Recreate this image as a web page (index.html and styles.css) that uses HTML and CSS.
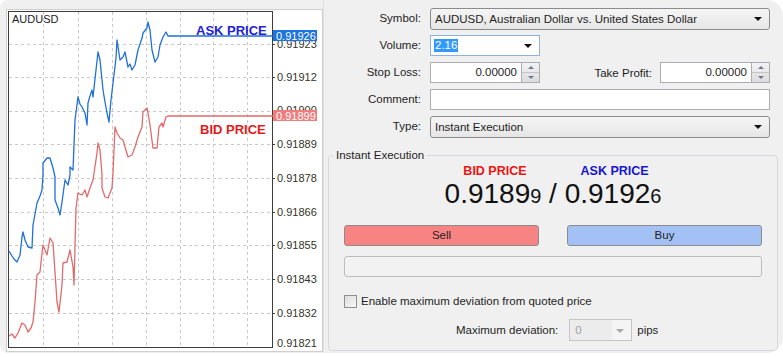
FILE: index.html
```html
<!DOCTYPE html>
<html>
<head>
  <title>Order - AUDUSD</title>
  <link rel="stylesheet" href="styles.css">
</head>
<body>
<div class="screen">

  <div class="chart-pane">
    <svg class="chart" width="317" height="343" viewBox="6 9 317 343">
      <rect x="6.5" y="9.5" width="316" height="342" fill="#fff" stroke="#cfcfcf"/>
      <rect x="8.5" y="11.5" width="264" height="336" fill="#fff" stroke="#3c3c3c"/>

      <g class="grid">
        <line x1="43.5" y1="12" x2="43.5" y2="347"/>
        <line x1="78.5" y1="12" x2="78.5" y2="347"/>
        <line x1="112.5" y1="12" x2="112.5" y2="347"/>
        <line x1="146.5" y1="12" x2="146.5" y2="347"/>
        <line x1="180.5" y1="12" x2="180.5" y2="347"/>
        <line x1="213.5" y1="12" x2="213.5" y2="347"/>
        <line x1="247.5" y1="12" x2="247.5" y2="347"/>
        <line x1="9" y1="44.5" x2="272" y2="44.5"/>
        <line x1="9" y1="77.5" x2="272" y2="77.5"/>
        <line x1="9" y1="111.5" x2="272" y2="111.5"/>
        <line x1="9" y1="144.5" x2="272" y2="144.5"/>
        <line x1="9" y1="178.5" x2="272" y2="178.5"/>
        <line x1="9" y1="212.5" x2="272" y2="212.5"/>
        <line x1="9" y1="245.5" x2="272" y2="245.5"/>
        <line x1="9" y1="279.5" x2="272" y2="279.5"/>
        <line x1="9" y1="313.5" x2="272" y2="313.5"/>
      </g>

      <text class="symbol-name" x="12" y="23">AUDUSD</text>

      <polyline class="ask-line" points="9,251 12,256 14,259 17,262 20,255 22,237 23,232 25,240 28,247 32,248 33,225 37,203 40,196 42,190 43,175 43,163 47,158 50,158 53,168 55,177 55,200 58,208 60,215 62,202 65,180 68,185 70,175 70,167 73,170 75,120 78,97 80,104 82,107 85,113 87,125 88,103 90,96 92,90 93,97 96,70 98,52 100,60 103,90 105,102 107,113 109,122 111,100 113,83 116,58 117,40 120,60 123,57 125,52 128,67 130,64 132,70 135,65 138,50 142,38 143,33 147,28 148,22 150,30 152,50 155,62 158,57 160,45 163,37 166,32 168,36 273,36"/>
      <polyline class="bid-line" points="9,336 12,334 15,338 18,333 22,323 25,325 28,332 31,328 33,322 35,302 37,275 40,272 42,253 43,245 47,255 50,238 53,243 55,272 57,302 59,312 62,285 63,263 67,262 70,250 73,267 74,285 76,208 78,193 82,195 85,190 87,197 90,188 93,180 97,153 98,143 100,150 102,175 102,188 105,197 108,198 112,188 113,173 115,127 117,133 120,138 123,140 125,147 128,157 132,155 135,147 138,137 142,127 143,112 147,108 148,113 150,125 153,148 157,148 159,127 162,123 163,127 166,117 168,116 273,116"/>

      <text class="chart-ask" x="196" y="35">ASK PRICE</text>
      <text class="chart-bid" x="200" y="134">BID PRICE</text>

      <g class="ticks">
        <line x1="272" y1="44.5" x2="275" y2="44.5"/>
        <line x1="272" y1="77.5" x2="275" y2="77.5"/>
        <line x1="272" y1="144.5" x2="275" y2="144.5"/>
        <line x1="272" y1="178.5" x2="275" y2="178.5"/>
        <line x1="272" y1="212.5" x2="275" y2="212.5"/>
        <line x1="272" y1="245.5" x2="275" y2="245.5"/>
        <line x1="272" y1="279.5" x2="275" y2="279.5"/>
        <line x1="272" y1="313.5" x2="275" y2="313.5"/>
      </g>

      <g class="axis">
        <text x="277" y="48">0.91923</text>
        <text x="277" y="81">0.91912</text>
        <text x="277" y="114">0.91900</text>
        <text x="277" y="148">0.91889</text>
        <text x="277" y="182">0.91878</text>
        <text x="277" y="216">0.91866</text>
        <text x="277" y="249">0.91855</text>
        <text x="277" y="283">0.91843</text>
        <text x="277" y="317">0.91832</text>
        <text x="277" y="347">0.91821</text>
      </g>

      <rect x="273" y="30" width="44" height="11" fill="#1d73e2"/>
      <text class="tag" x="276" y="39.5">0.91926</text>
      <rect x="273" y="110" width="44" height="11" fill="#f07c7c"/>
      <text class="tag" x="276" y="119.5">0.91899</text>
    </svg>
  </div>

  <div class="order-pane">
    <div class="order-form">
      <label class="field-label">Symbol:</label>
      <div class="combo">AUDUSD, Australian Dollar vs. United States Dollar<span class="arrow"></span></div>

      <label class="field-label">Volume:</label>
      <div class="volume-box"><span class="selected">2.16</span><span class="arrow"></span></div>

      <label class="field-label">Stop Loss:</label>
      <div class="sl-tp-row">
        <div class="spinbox">
          <div class="spin-value">0.00000</div>
          <div class="spin-buttons"><span class="up"></span><span class="down"></span></div>
        </div>
        <label class="tp-label">Take Profit:</label>
        <div class="spinbox">
          <div class="spin-value">0.00000</div>
          <div class="spin-buttons"><span class="up"></span><span class="down"></span></div>
        </div>
      </div>

      <label class="field-label">Comment:</label>
      <div class="text-box"></div>

      <label class="field-label">Type:</label>
      <div class="combo">Instant Execution<span class="arrow"></span></div>
    </div>

    <fieldset class="exec-group">
      <legend>Instant Execution</legend>

      <div class="price-titles">
        <span class="bid-title">BID PRICE</span>
        <span class="ask-title">ASK PRICE</span>
      </div>
      <div class="quote">0.9189<small>9</small> / 0.9192<small>6</small></div>

      <div class="trade-buttons">
        <div class="btn sell">Sell</div>
        <div class="btn buy">Buy</div>
      </div>

      <div class="status-bar"></div>

      <div class="check-row">
        <span class="checkbox"></span>
        <span>Enable maximum deviation from quoted price</span>
      </div>

      <div class="deviation-row">
        <span>Maximum deviation:</span>
        <div class="dev-combo"><span class="dev-value">0</span><span class="arrow"></span></div>
        <span>pips</span>
      </div>
    </fieldset>
  </div>

</div>
</body>
</html>
```

FILE: styles.css
```css
body {
  margin: 0;
  background: #fff;
  font-family: "Liberation Sans", Arial, sans-serif;
  font-size: 11.5px;
  color: #1e1e1e;
}

.screen {
  width: 783px;
  height: 353px;
  display: flex;
  background: #f0f0f0;
  border-radius: 8px 16px 16px 8px;
  overflow: hidden;
}

/* chart window */
.chart-pane {
  width: 317px;
  padding: 9px 0 0 6px;
}

.chart {
  display: block;
  font-family: "Liberation Sans", Arial, sans-serif;
}

.grid line {
  stroke: #c9c9c9;
  stroke-width: 1;
  stroke-dasharray: 3 3;
}

.ticks line {
  stroke: #3c3c3c;
}

.ask-line, .bid-line {
  fill: none;
  stroke-width: 1.3;
  stroke-linejoin: round;
}

.ask-line {
  stroke: #1f6fdc;
}

.bid-line {
  stroke: #e26a6a;
}

.symbol-name {
  font-size: 11px;
  fill: #222;
}

.chart-ask, .chart-bid {
  font-size: 13px;
  font-weight: bold;
}

.chart-ask {
  fill: #2222d6;
}

.chart-bid {
  fill: #e41b1b;
}

.axis text {
  font-size: 11px;
  fill: #34342a;
}

.tag {
  font-size: 11px;
  fill: #fff;
}

/* order window */
.order-pane {
  flex: 1;
  border-left: 1px solid #e0e0e0;
}

.order-form {
  display: grid;
  grid-template-columns: 97px 340px;
  grid-auto-rows: 21px;
  column-gap: 9px;
  row-gap: 6px;
  padding-top: 8px;
}

.field-label {
  text-align: right;
  line-height: 21px;
}

.combo {
  position: relative;
  box-sizing: border-box;
  height: 22px;
  line-height: 20px;
  padding-left: 4px;
  border: 1px solid #8b8b8b;
  border-radius: 3px;
  background: linear-gradient(#f5f5f5, #e6e6e6);
}

.arrow {
  position: absolute;
  right: 7px;
  top: 8px;
  width: 0;
  height: 0;
  border-left: 4px solid transparent;
  border-right: 4px solid transparent;
  border-top: 4px solid #111;
}

.volume-box {
  position: relative;
  box-sizing: border-box;
  width: 110px;
  height: 21px;
  padding: 3px 0 0 3px;
  border: 1px solid #8fb2d8;
  background: #fff;
}

.volume-box .selected {
  display: inline-block;
  background: #3399ff;
  color: #fff;
  line-height: 13px;
  padding: 0 1px;
}

.sl-tp-row {
  display: flex;
  align-items: center;
}

.spinbox {
  display: flex;
  width: 110px;
  height: 21px;
}

.spin-value {
  box-sizing: border-box;
  width: 92px;
  height: 21px;
  line-height: 19px;
  padding-right: 4px;
  text-align: right;
  background: #fff;
  border: 1px solid #abadb3;
}

.spin-buttons {
  box-sizing: border-box;
  width: 18px;
  height: 21px;
  display: flex;
  flex-direction: column;
  border: 1px solid #abadb3;
  border-left: none;
  background: linear-gradient(#f3f3f3, #dcdcdc);
}

.spin-buttons span {
  flex: 1;
  display: flex;
  align-items: center;
  justify-content: center;
}

.spin-buttons .up {
  border-bottom: 1px solid #c4c4c4;
}

.spin-buttons .up::before,
.spin-buttons .down::before {
  content: "";
  width: 0;
  height: 0;
  border-left: 3px solid transparent;
  border-right: 3px solid transparent;
}

.spin-buttons .up::before {
  border-bottom: 3px solid #6a7b98;
}

.spin-buttons .down::before {
  border-top: 3px solid #6a7b98;
}

.tp-label {
  flex: 1;
  text-align: right;
  padding-right: 8px;
}

.text-box {
  box-sizing: border-box;
  height: 21px;
  background: #fff;
  border: 1px solid #abadb3;
}

/* instant execution group */
.exec-group {
  box-sizing: border-box;
  height: 203px;
  min-width: 0;
  margin: 11px 5px 0 4px;
  padding: 0 15px;
  border: 1px solid #d5d9dd;
  border-radius: 4px;
}

.exec-group legend {
  margin-left: -11px;
  padding: 0 3px;
  line-height: 14px;
}

.price-titles {
  display: flex;
  justify-content: center;
  gap: 54px;
  margin-top: 2px;
  padding-left: 6px;
  line-height: 14px;
  font-size: 12.5px;
  font-weight: bold;
}

.bid-title {
  color: #ee1414;
}

.ask-title {
  color: #1616d2;
}

.quote {
  margin-top: 0;
  text-align: center;
  font-size: 28px;
  line-height: 32px;
  color: #111;
}

.quote small {
  font-size: 20px;
}

.trade-buttons {
  display: flex;
  justify-content: space-between;
  margin-top: 13px;
}

.btn {
  box-sizing: border-box;
  width: 195px;
  height: 21px;
  line-height: 19px;
  text-align: center;
  border: 1px solid #8c8c8c;
  border-radius: 3px;
}

.sell {
  background: #f88383;
}

.buy {
  background: #a3c1f4;
}

.status-bar {
  box-sizing: border-box;
  height: 21px;
  margin-top: 10px;
  border: 1px solid #bcbcbc;
  border-radius: 3px;
  background: #f2f2f2;
}

.check-row {
  display: flex;
  align-items: center;
  gap: 4px;
  height: 14px;
  margin-top: 17px;
}

.checkbox {
  box-sizing: border-box;
  width: 13px;
  height: 13px;
  border: 1px solid #8e8f8f;
  background: linear-gradient(135deg, #dcdcdc, #f8f8f8);
}

.deviation-row {
  display: flex;
  align-items: center;
  height: 22px;
  margin-top: 11px;
  padding-left: 112px;
}

.dev-combo {
  position: relative;
  box-sizing: border-box;
  width: 63px;
  height: 22px;
  margin: 0 5px 0 11px;
  border: 1px solid #c5c5c5;
  background: #f4f4f4;
}

.dev-value {
  display: block;
  width: 42px;
  height: 20px;
  line-height: 20px;
  padding-left: 5px;
  box-sizing: border-box;
  color: #a0a0a0;
  background: #ececec;
}

.dev-combo .arrow {
  top: 9px;
  border-top-color: #a8a8a8;
}
```
